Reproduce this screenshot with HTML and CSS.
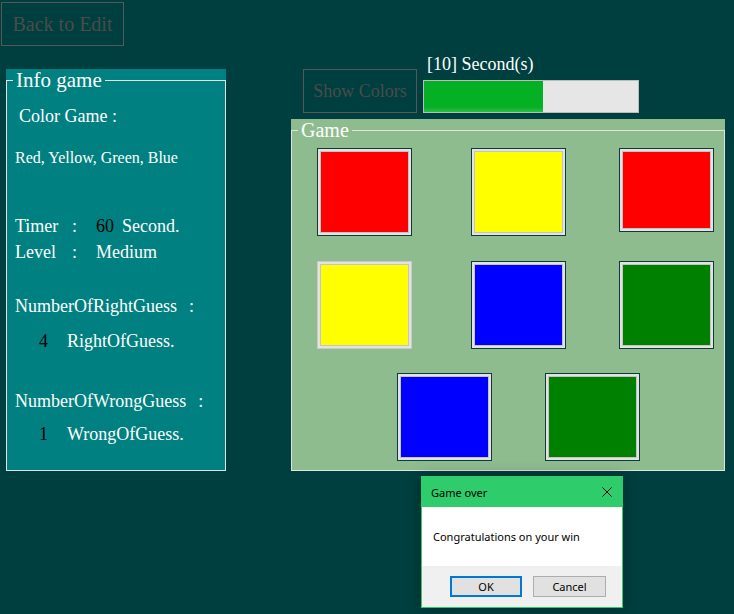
FILE: index.html
```html
<!DOCTYPE html>
<html>
<head>
<meta charset="utf-8">
<title>Color Game</title>
<link rel="stylesheet" href="styles.css">
</head>
<body>
<div class="topbar">
  <button class="btn-flat btn-back">Back to Edit</button>
</div>
<div class="main">
  <section class="info">
    <div class="group">
      <div class="legend legend-info">Info game</div>
      <div class="row title">Color Game :</div>
      <div class="row colors">Red, Yellow, Green, Blue</div>
      <div class="row timer-row"><span class="key">Timer</span><span class="colon">:</span><span class="val">60</span><span class="unit">Second.</span></div>
      <div class="row level-row"><span class="key">Level</span><span class="colon">:</span><span class="plain">Medium</span></div>
      <div class="row right-head">NumberOfRightGuess<span class="tail-colon">:</span></div>
      <div class="row right-val"><span class="num">4</span><span>RightOfGuess.</span></div>
      <div class="row wrong-head">NumberOfWrongGuess<span class="tail-colon">:</span></div>
      <div class="row wrong-val"><span class="num">1</span><span>WrongOfGuess.</span></div>
    </div>
  </section>
  <section class="play">
    <div class="controls">
      <button class="btn-flat btn-show">Show Colors</button>
      <div class="timer">
        <div class="timer-label">[10] Second(s)</div>
        <div class="progress"><div class="fill" style="width:55.6%"></div></div>
      </div>
    </div>
    <div class="game">
      <div class="group">
        <div class="legend legend-game">Game</div>
        <div class="tile-row row-1">
          <div class="tile"><div class="swatch red"></div></div>
          <div class="tile gap-a"><div class="swatch yellow"></div></div>
          <div class="tile gap-b short"><div class="swatch red"></div></div>
        </div>
        <div class="tile-row row-2">
          <div class="tile plain-edge"><div class="swatch yellow"></div></div>
          <div class="tile gap-a"><div class="swatch blue"></div></div>
          <div class="tile gap-b"><div class="swatch green"></div></div>
        </div>
        <div class="tile-row row-3">
          <div class="tile"><div class="swatch blue"></div></div>
          <div class="tile gap-b"><div class="swatch green"></div></div>
        </div>
      </div>
    </div>
  </section>
</div>

<div class="dialog">
  <div class="dlg-title">
    <span>Game over</span>
    <svg class="dlg-close" width="10" height="10" viewBox="0 0 10 10"><path d="M0.5 0.5 L9.5 9.5 M9.5 0.5 L0.5 9.5" stroke="#000" stroke-width="1" fill="none"/></svg>
  </div>
  <div class="dlg-body">Congratulations on your win</div>
  <div class="dlg-foot">
    <button class="dlg-btn dlg-ok">OK</button>
    <button class="dlg-btn dlg-cancel">Cancel</button>
  </div>
</div>
</body>
</html>
```
FILE: styles.css
```css
* { box-sizing: border-box; }

html, body {
  margin: 0;
  padding: 0;
}

body {
  background: #003f3f;
  width: 734px;
  height: 614px;
  overflow: hidden;
  font-family: "Liberation Serif", "Times New Roman", serif;
  color: #ffffff;
  position: relative;
}

.topbar {
  padding: 2px 0 0 1px;
  height: 46px;
}

.btn-flat {
  font-family: "Liberation Serif", "Times New Roman", serif;
  background: transparent;
  border: 1px solid #575757;
  color: #4b4b4b;
  padding: 0;
  margin: 0;
}

.btn-back {
  width: 123px;
  height: 44px;
  font-size: 20px;
}

.main {
  display: flex;
  margin-top: 7px;
}

/* ---------- Info panel ---------- */
.info {
  margin: 16px 0 0 6px;
  width: 220px;
  height: 402px;
  background: #008080;
  padding-top: 11px;
}

.group {
  border: 1px solid #e2e2e2;
  height: 100%;
}

.legend {
  width: fit-content;
  padding: 0 3px;
  margin: -12px 0 0 6px;
  height: 22px;
  line-height: 22px;
  color: #ffffff;
}

.legend-info {
  background: #008080;
  font-size: 21px;
}

.legend-game {
  background: #8fbc8f;
  font-size: 20px;
}

.info .row {
  padding-left: 8px;
  font-size: 18px;
  line-height: 20px;
  height: 20px;
  white-space: nowrap;
  display: flex;
}

.info .title { margin-top: 15px; padding-left: 12px; }
.info .colors { margin-top: 22px; font-size: 16px; }
.info .timer-row { margin-top: 48px; }
.info .level-row { margin-top: 6px; }
.info .right-head { margin-top: 34px; }
.info .right-val { margin-top: 15px; }
.info .wrong-head { margin-top: 40px; }
.info .wrong-val { margin-top: 13px; }

.key { width: 57px; }
.colon { width: 24px; }
.val { color: #000000; width: 26px; }

.tail-colon { margin-left: 12px; }

.num {
  color: #000000;
  margin-left: 24px;
  width: 28px;
}

/* ---------- Play area ---------- */
.play {
  margin-left: 65px;
  width: 434px;
}

.controls {
  height: 66px;
  display: flex;
  align-items: flex-end;
  padding: 0 0 6px 12px;
}

.btn-show {
  width: 114px;
  height: 44px;
  font-size: 18px;
}

.timer {
  margin-left: 6px;
  width: 216px;
}

.timer-label {
  font-size: 18px;
  line-height: 20px;
  padding-left: 4px;
  margin-bottom: 6px;
  white-space: nowrap;
}

.progress {
  height: 33px;
  border: 1px solid #bcbcbc;
  background: #e6e6e6;
}

.fill {
  height: 100%;
  background: linear-gradient(#06b025 0, #06b025 85%, #2cbf47 100%);
}

.game {
  height: 352px;
  background: #8fbc8f;
  padding-top: 11px;
}

.tile-row {
  display: flex;
  align-items: flex-start;
}

.row-1 { margin-top: 7px; padding-left: 25px; }
.row-2 { margin-top: 25px; padding-left: 25px; }
.row-3 { margin-top: 24px; padding-left: 105px; }

.tile {
  width: 95px;
  height: 88px;
  border: 1px solid #0b3b3b;
  background: #e3e3e3;
  padding: 2px;
}

.tile.short { height: 84px; }
.tile.plain-edge { border-color: #c9c9c9; }

.gap-a { margin-left: 59px; }
.gap-b { margin-left: 53px; }

.swatch {
  width: 100%;
  height: 100%;
  border: 1px solid #c4c4c4;
}

.red { background: #ff0000; }
.yellow { background: #ffff00; }
.blue { background: #0000ff; }
.green { background: #008000; }

/* ---------- Dialog ---------- */
.dialog {
  position: absolute;
  left: 421px;
  top: 476px;
  width: 202px;
  height: 132px;
  border: 1px solid #2ecc6b;
  background: #ffffff;
  box-shadow: 0 0 12px rgba(0, 0, 0, 0.35);
  font-family: "Noto Sans", "Liberation Sans", sans-serif;
  font-size: 11px;
  color: #000000;
}

.dlg-title {
  height: 30px;
  background: #2ecc6b;
  display: flex;
  align-items: center;
  justify-content: space-between;
  padding: 0 10px 0 9px;
}

.dlg-close { display: block; }

.dlg-body {
  height: 59px;
  display: flex;
  align-items: center;
  padding-left: 11px;
}

.dlg-foot {
  height: 41px;
  background: #f0f0f0;
  display: flex;
  justify-content: flex-end;
  align-items: flex-start;
  gap: 11px;
  padding: 10px 16px 0 0;
}

.dlg-btn {
  height: 21px;
  background: #e1e1e1;
  font-family: "Noto Sans", "Liberation Sans", sans-serif;
  font-size: 11px;
  color: #000000;
  padding: 0;
  margin: 0;
}

.dlg-ok {
  width: 72px;
  border: 2px solid #0078d7;
}

.dlg-cancel {
  width: 73px;
  border: 1px solid #adadad;
}
```
